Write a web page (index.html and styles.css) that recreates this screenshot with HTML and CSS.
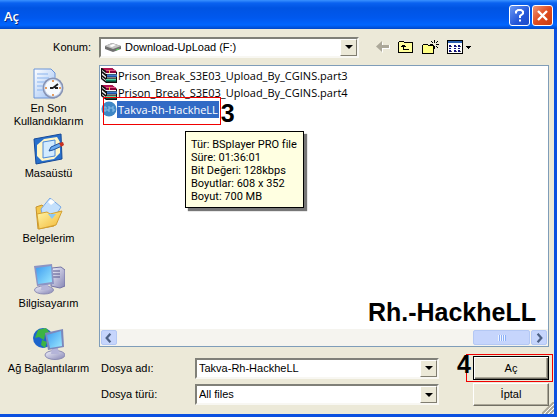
FILE: index.html
```html
<!DOCTYPE html>
<html lang="tr">
<head>
<meta charset="utf-8">
<title>Aç</title>
<link rel="stylesheet" href="styles.css">
</head>
<body>
<svg class="defs" aria-hidden="true">
  <defs>
    <symbol id="books" viewBox="0 0 16 16">
      <path d="M0 1h11l5 4v11H5l-5-4z" fill="#101010"/>
      <path d="M1 1h10l4 3H5z" fill="#b41450"/><path d="M5 4h10v2H5z" fill="#8c0038"/><path d="M5 3h10v1H5z" fill="#e05888"/>
      <path d="M1 3l4 3H15v1H5L1 4z" fill="#f4f4f4"/>
      <path d="M6 8h10v2H6z" fill="#1c50a8"/><path d="M6 7.500h10v1H6z" fill="#60a8f0"/><path d="M1 6l4 3.500v1.500L1 8z" fill="#f4f4f4"/>
      <path d="M5 12.500h10v2H5z" fill="#108868"/><path d="M5 12h10v1H5z" fill="#58d8a0"/><path d="M1 10l4 3v1l-4-3z" fill="#f4f4f4"/>
      <path d="M6 10.500h9v.8H6z" fill="#f4f4f4"/>
      <path d="M8 3h1v3H8z" fill="#e8c040"/>
    </symbol>
    <linearGradient id="screen" x1="0" y1="0" x2="1" y2="1"><stop offset="0" stop-color="#3d9cf0"/><stop offset="1" stop-color="#9be8ff"/></linearGradient>
    <linearGradient id="paper" x1="0" y1="0" x2="1" y2="1"><stop offset="0" stop-color="#fff"/><stop offset="1" stop-color="#9cc0f4"/></linearGradient>
    <linearGradient id="metal" x1="0" y1="0" x2="1" y2="1"><stop offset="0" stop-color="#f4f4fc"/><stop offset="1" stop-color="#8484b4"/></linearGradient>
    <linearGradient id="folder" x1="0" y1="0" x2="1" y2="1"><stop offset="0" stop-color="#fff6a8"/><stop offset="1" stop-color="#f2b632"/></linearGradient>
  </defs>
</svg>

<header class="titlebar">
  <h1>Aç</h1>
  <button class="cap help" type="button" aria-label="Yardım"><svg viewBox="0 0 19 19"><path d="M6 7.500V5.500l2-1.500h3l2 1.500v2l-3 2.500v2M9 14.500h2" fill="none" stroke="#fff" stroke-width="2"/></svg></button>
  <button class="cap close" type="button" aria-label="Kapat"><svg viewBox="0 0 19 19"><path d="M5 5l9 9M14 5l-9 9" fill="none" stroke="#fff" stroke-width="2.400"/></svg></button>
</header>

<main class="dialog">
  <div class="lookin">
    <label for="konum">Konum:</label>
    <div class="combo">
      <svg class="drive" viewBox="0 0 16 12"><path d="M0 5l7-3 9 3v3l-8 3-8-3z" fill="#707070"/><path d="M0 5l7-3 9 3-8 3z" fill="#c4c4c4"/><path d="M4 5l4-2 3 1-4 2z" fill="#fff"/><path d="M11 9l3-1" stroke="#5d5"/></svg>
      <select id="konum"><option>Download-UpLoad (F:)</option></select>
      <span class="arrow"></span>
    </div>
    <div class="tools">
      <button type="button" aria-label="Geri"><svg width="14" height="12" viewBox="0 0 14 12"><path d="M7 1v3h7v4H7v4L1 6z" fill="#fff"/><path d="M6 0v4h7v3H6v4L0 5.500z" fill="#aca899"/></svg></button>
      <button type="button" aria-label="Üst klasör"><svg width="16" height="14" viewBox="0 0 16 14" shape-rendering="crispEdges"><path d="M.5 12.500v-10l1-1h4l1 1h8v10z" fill="#ffff9c" stroke="#000"/><path d="M5.500 5v4.500H11M3 6.500h5M4 5.500h3" fill="none" stroke="#000"/></svg></button>
      <button type="button" aria-label="Yeni klasör"><svg width="17" height="15" viewBox="0 0 17 15" shape-rendering="crispEdges"><path d="M.5 13.500v-8l1-1h4l1 1h5v8z" fill="#ffff84" stroke="#000"/><path d="M12.500 0v3M12.500 6v3M8 4.500h3M14 4.500h3" stroke="#000"/><path d="M9 1h1v1H9zM10 2h1v1h-1zM15 1h1v1h-1zM14 2h1v1h-1zM14 6h1v1h-1zM15 7h1v1h-1z"/></svg></button>
      <button type="button" aria-label="Görünümler"><svg width="24" height="14" viewBox="0 0 24 14" shape-rendering="crispEdges"><path d="M.5.5h15v13H.5z" fill="#fff" stroke="#000"/><path d="M1 1h14v2H1z" fill="#2a5fae"/><path d="M2 5h2v2H2zM7 5h2v2H7zM11 5h2v2h-2zM2 8h2v1H2zM7 8h2v1H7zM11 8h2v1h-2zM2 10h2v2H2zM7 10h2v2H7zM11 10h2v2h-2z" fill="#10107c"/><path d="M4 6h1M9 6h1M13 6h1M4 11h1M9 11h1M13 11h1" stroke="#555"/><path d="M18 6h6l-3 3z"/></svg></button>
    </div>
  </div>

  <nav class="places">
    <a href="#"><svg viewBox="0 0 32 32"><path d="M1 1h17l4 4v25H1z" fill="url(#paper)" stroke="#6a94d8"/><path d="M4 6h11M4 10h12M4 14h9M4 18h6M4 22h6" stroke="#8ab4ee"/><circle cx="20" cy="20" r="10.500" fill="#8793b4"/><circle cx="20" cy="20" r="8.500" fill="#f7fbff" stroke="#c6d5ec"/><path d="M20 20l5-4M20 20h-3M22 20h3" stroke="#222" stroke-width="1.800"/><path d="M20 12v2M20 26v2M12 20h2M26 20h2" stroke="#e08030" stroke-width="1.500"/></svg><span>En Son Kullandıklarım</span></a>
    <a href="#"><svg viewBox="0 0 32 32"><path d="M1 6l27-5 1 25-26 5z" fill="#2870cc" stroke="#164a98"/><path d="M4 12l7-6 13-2 3 5v11l-6 6-12 2-5-5z" fill="#fff6c8"/><path d="M10 9l12-2v16l-12 2z" fill="#d2ebff" stroke="#4a88d8"/><path d="M16 18l2-4 9-4 2 3-9 4z" fill="#6aaaf0" stroke="#24549c"/><path d="M26 10l4-1 1 3-3 2z" fill="#c83020"/></svg><span>Masaüstü</span></a>
    <a href="#"><svg viewBox="0 0 32 32"><path d="M3 9l6-2 4 4 14 3-6 14-16 3z" fill="#f4c74c" stroke="#c8942c"/><path d="M8 11l9-11 11 9-8 13-9 2z" fill="#c4e0fc" stroke="#78a8e4"/><path d="M15 4l3-3 4 3-4 3z" fill="#fff"/><path d="M4 16l10-2 3 2 12-3-6 14-17 4z" fill="url(#folder)" stroke="#d4a030"/><path d="M15 16h8l-4 5z" fill="#8cc8f4"/></svg><span>Belgelerim</span></a>
    <a href="#"><svg viewBox="0 0 32 32"><path d="M19 5l9-1 4 3v16l-5 2-9-2z" fill="url(#metal)" stroke="#7474a4"/><path d="M20 8h7M20 11h7M20 14h7" stroke="#54548c"/><ellipse cx="11" cy="27" rx="9.500" ry="4" fill="url(#metal)" stroke="#8c8cb4"/><path d="M9 20h6l1 7H8z" fill="#b4b4d8"/><path d="M1 3l18-2 2 20-17 2z" fill="#8c94c4"/><path d="M3 5l15-2 1 16-14 2z" fill="url(#screen)"/></svg><span>Bilgisayarım</span></a>
    <a href="#"><svg viewBox="0 0 32 32"><circle cx="10" cy="10" r="10" fill="#1c64cc"/><path d="M5 2l8-2 4 5-5 2-1 5-5-3-4 1zM9 12l5 2-2 6-4-3z" fill="#3cb444"/><ellipse cx="22" cy="27" rx="10" ry="4.500" fill="url(#metal)" stroke="#8c8cb4"/><path d="M19 20h6l1 6h-8z" fill="#b4b4d8"/><path d="M12 5l18-4 1 18-16 3z" fill="#7c88bc"/><path d="M14 7l14-4 1 15-12 2z" fill="url(#screen)"/></svg><span>Ağ Bağlantılarım</span></a>
  </nav>

  <section class="files">
    <ul>
      <li><svg><use href="#books"/></svg><span>Prison_Break_S3E03_Upload_By_CGINS.part3</span></li>
      <li><svg><use href="#books"/></svg><span>Prison_Break_S3E03_Upload_By_CGINS.part4</span></li>
      <li class="selected"><svg viewBox="0 0 16 16"><circle cx="8" cy="8" r="7.500" fill="#3f87c5"/><path d="M3 6v4h2V6zM7 6h2v2H7v2h2M13 6h-2v2h2v2h-2" fill="none" stroke="#8fc1e8"/></svg><span>Takva-Rh-HackheLL</span><i class="mark mark-file"></i><b class="step step-file">3</b></li>
    </ul>
    <div class="tooltip" role="tooltip">Tür: BSplayer PRO file<br>Süre: 01:36:01<br>Bit Değeri: 128kbps<br>Boyutlar: 608 x 352<br>Boyut: 700 MB</div>
    <p class="signature">Rh.-HackheLL</p>
    <div class="scrollbar">
      <button type="button" aria-label="Sola kaydır"><svg viewBox="0 0 15 15"><path d="M9 3L5 7.500 9 12" fill="none" stroke="#4d6185" stroke-width="2.400"/></svg></button>
      <span class="thumb"></span>
      <button type="button" aria-label="Sağa kaydır"><svg viewBox="0 0 15 15"><path d="M6 3l4 4.500L6 12" fill="none" stroke="#4d6185" stroke-width="2.400"/></svg></button>
    </div>
  </section>

  <form class="fields">
    <label for="ad">Dosya adı:</label>
    <div class="combo"><input id="ad" type="text" value="Takva-Rh-HackheLL"><span class="arrow"></span></div>
    <div class="action"><button class="push default" type="button">Aç</button><i class="mark mark-open"></i><b class="step step-open">4</b></div>
    <label for="tur">Dosya türü:</label>
    <div class="combo"><select id="tur"><option>All files</option></select><span class="arrow"></span></div>
    <div class="action"><button class="push" type="button">İptal</button></div>
  </form>
  <svg class="grip" viewBox="0 0 12 12"><path d="M0 12L12 0M4 12l8-8M8 12l4-4" stroke="#aca899" stroke-width="2"/><path d="M2 12L12 2M6 12l6-6M10 12l2-2" stroke="#fff"/></svg>
</main>
</body>
</html>
```
FILE: styles.css
```css
* { box-sizing: border-box; }

body {
  margin: 0;
  min-height: 100vh;
  display: flex;
  flex-direction: column;
  background: #ece9d8;
  color: #000;
  font: 11px/13px "Liberation Sans", Arial, sans-serif;
}

button, input, select { font: inherit; color: inherit; }
button { padding: 0; }
svg { display: block; }
.defs { position: absolute; width: 0; height: 0; }

.titlebar {
  display: flex;
  align-items: center;
  gap: 2px;
  height: 29px;
  padding: 2px 4px 0;
  background: linear-gradient(#3a92ff 0, #0a62f0 3px, #0054e3 8px, #0058ee 18px, #0066ff 25px, #0048c8 29px);
}
.titlebar h1 {
  flex: 1;
  margin: 0;
  color: #fff;
  font: 600 13px/18px "Open Sans", "Noto Sans", sans-serif;
  text-shadow: 1px 1px #0a2a80;
}
.cap {
  width: 21px;
  height: 21px;
  border: 1px solid #fff;
  border-radius: 3px;
}
.help { background: linear-gradient(135deg, #6a98f4, #2456d8 60%, #1c4cc8); }
.close { background: linear-gradient(135deg, #f09878, #e04c20 50%, #c83c10); }

.dialog {
  flex: 1;
  position: relative;
  display: grid;
  grid-template-columns: 99px 1fr;
  grid-template-rows: 36px 1fr auto;
  padding: 0 5px 8px 0;
  border: solid #0a50e0;
  border-width: 0 3px 3px 0;
}

.lookin {
  grid-column: 1 / -1;
  display: grid;
  grid-template-columns: 99px 260px 1fr;
  align-items: center;
}
.lookin label { padding-right: 8px; text-align: right; }

.combo {
  display: flex;
  align-items: center;
  height: 21px;
  background: #fff;
  border: 2px solid;
  border-color: #808078 #f8f7f2 #f8f7f2 #808078;
}
.combo select, .combo input {
  flex: 1;
  min-width: 0;
  height: 17px;
  padding: 0 2px;
  border: 0;
  outline: 0;
  background: none;
  appearance: none;
}
.drive { width: 16px; height: 12px; margin: 0 4px; }
.lookin select { padding: 0; }
.arrow {
  display: grid;
  place-items: center;
  width: 17px;
  height: 17px;
  background: #ece9d8;
  border: 1px solid;
  border-color: #fff #807d70 #807d70 #fff;
  pointer-events: none;
}
.arrow::before {
  content: "";
  border: solid transparent;
  border-width: 4px 4px 0;
  border-top-color: #000;
}

.tools { display: flex; align-items: center; gap: 8px; padding-left: 17px; }
.tools button { border: 0; background: none; }

.places {
  grid-row: 2 / 4;
  display: flex;
  flex-direction: column;
  padding-top: 3px;
}
.places a {
  display: flex;
  flex-direction: column;
  align-items: center;
  gap: 2px;
  width: 97px;
  height: 65px;
  padding: 0 8px;
  color: #000;
  text-align: center;
  text-decoration: none;
}
.places span { margin: 0 -8px; }
.places a:first-child span { margin: 0; }
.places svg { width: 32px; height: 32px; }

.files {
  position: relative;
  display: flex;
  flex-direction: column;
  background: #fff;
  border: 1px solid #7f9db9;
  font: 11px/17px "Open Sans", "Noto Sans", sans-serif;
}
.files ul { flex: 1; margin: 0; padding: 1px; list-style: none; }
.files li { display: flex; position: relative; width: max-content; }
.files li svg { width: 16px; height: 16px; }
.files li span { padding: 0 1px; }
.selected span { background: #316ac5; color: #fff; }

.mark { position: absolute; border: 1px solid #f00000; pointer-events: none; }
.mark-file { inset: -4px -2px -7px 2px; }
.mark-open { inset: -2px -4px -2px -7px; }
.step { position: absolute; font: bold 25px/25px "Liberation Sans", Arial, sans-serif; }
.step-file { left: 100%; top: 0; padding-left: 2px; }
.step-open { right: 100%; top: -4px; padding-right: 2px; }

.tooltip {
  position: absolute;
  left: 85px;
  top: 65px;
  padding: 6px 6px 4px 5px;
  background: #ffffe1;
  border: 1px solid #000;
  box-shadow: 3px 3px 1px #777;
  font: 11px/13px Roboto, "Noto Sans", sans-serif;
  white-space: nowrap;
}
.signature {
  margin: 0;
  padding: 0 12px 3px;
  text-align: right;
  font: bold 25px/28px "Liberation Sans", Arial, sans-serif;
}

.scrollbar {
  display: flex;
  gap: 1px;
  height: 17px;
  padding: 1px;
  background: #f5f4ef;
}
.scrollbar button {
  width: 16px;
  border: 1px solid #b4c8f4;
  border-radius: 2px;
  background: #c6d5fc;
}
.thumb {
  width: 57px;
  margin-left: auto;
  border: 1px solid #b4c8f4;
  border-radius: 2px;
  background: repeating-linear-gradient(90deg, #eef4fe 0 1px, #8cb0f8 1px 2px) center / 8px 6px no-repeat #c6d5fc;
}

.fields {
  grid-column: 2;
  display: grid;
  grid-template-columns: 96px 1fr 76px;
  row-gap: 3px;
  align-items: center;
  padding-top: 9px;
}
.fields label { padding-left: 2px; }
.fields .combo { margin-right: 34px; }
.action { position: relative; }
.push {
  display: block;
  width: 100%;
  height: 23px;
  background: #ece9d8;
  border: 1px solid;
  border-color: #fff #716f64 #716f64 #fff;
  box-shadow: inset -1px -1px #aca899;
}
.default {
  height: 24px;
  border: 1px solid #000;
  box-shadow: inset 1px 1px #fff, inset -1px -1px #716f64, inset -2px -2px #aca899;
}
.grip { position: absolute; right: 0; bottom: 0; width: 12px; height: 12px; }
```
